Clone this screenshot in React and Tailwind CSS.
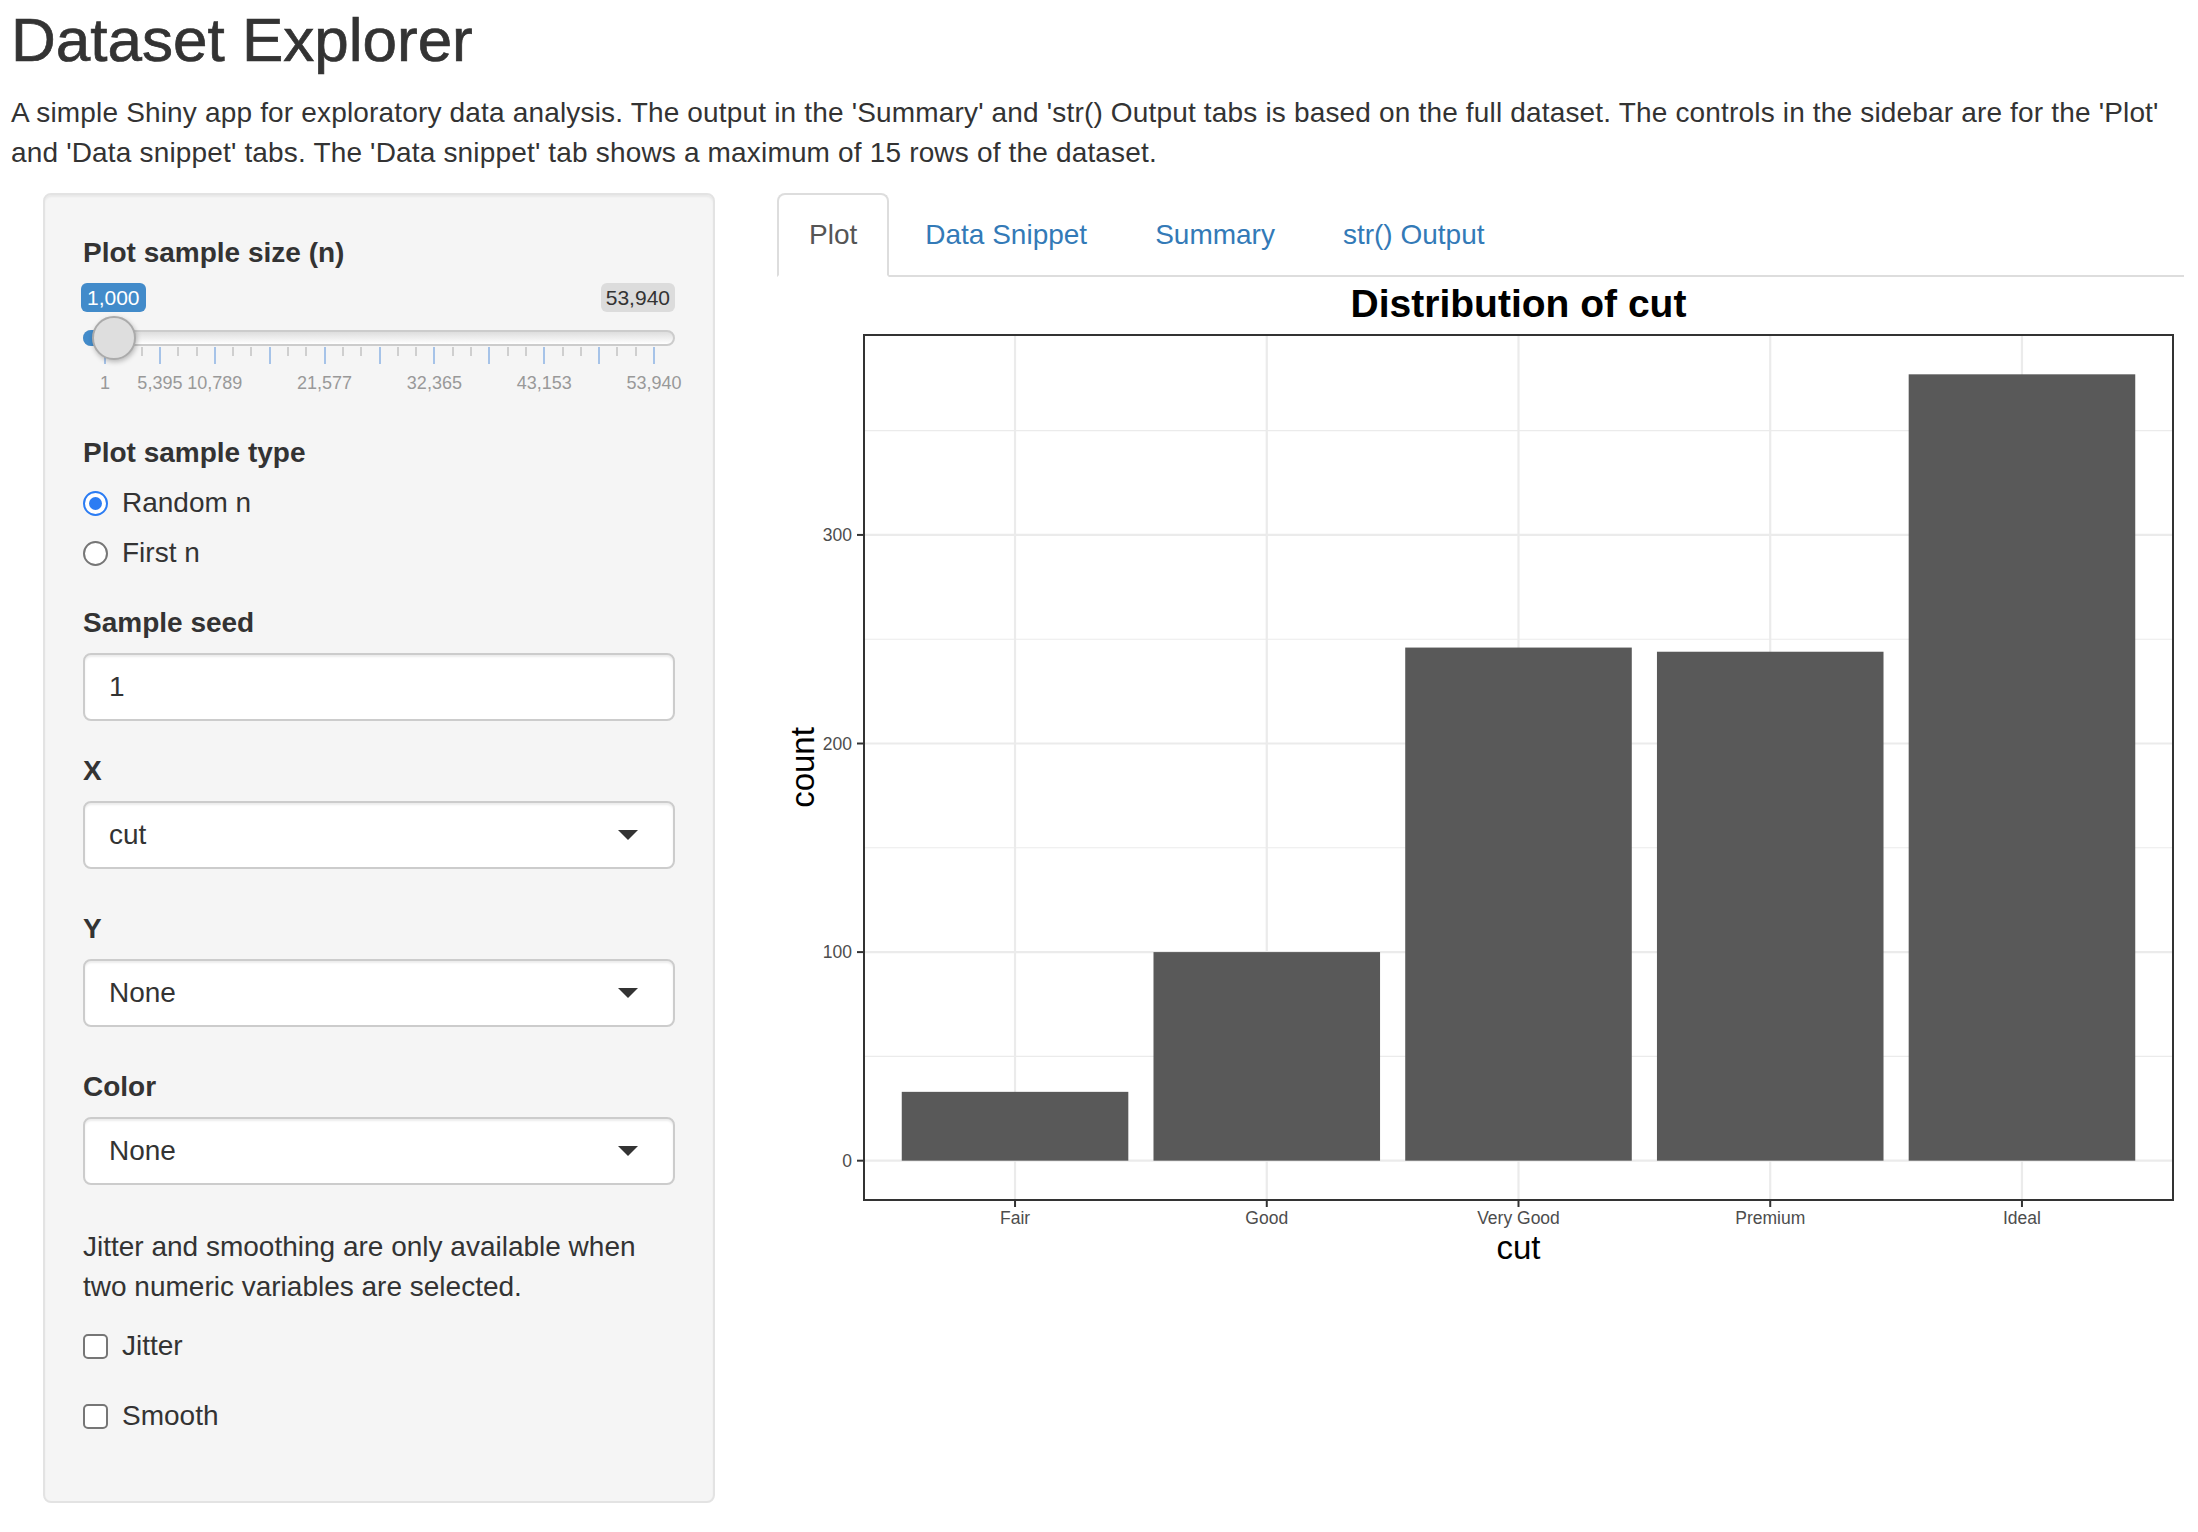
import React from "react";

const counts = [
  { cut: "Fair", n: 33 },
  { cut: "Good", n: 100 },
  { cut: "Very Good", n: 246 },
  { cut: "Premium", n: 244 },
  { cut: "Ideal", n: 377 },
];

const sliderLabels = [
  { k: 0, t: "1" },
  { k: 1, t: "5,395" },
  { k: 2, t: "10,789" },
  { k: 4, t: "21,577" },
  { k: 6, t: "32,365" },
  { k: 8, t: "43,153" },
  { k: 10, t: "53,940" },
];

const Label = ({ children, className = "mb-[10px]" }) => (
  <div className={"font-bold leading-[40px] " + className}>{children}</div>
);

const Caret = () => (
  <span className="w-0 h-0 border-l-[10px] border-r-[10px] border-t-[10px] border-l-transparent border-r-transparent border-t-[#333]" />
);

const SelectBox = ({ value, className = "" }) => (
  <div
    className={
      "h-[68px] flex items-center justify-between pl-[24px] pr-[35px] bg-white border-2 border-[#cccccc] rounded-[8px] shadow-[inset_0_2px_2px_rgba(0,0,0,0.075)] " +
      className
    }
  >
    <span>{value}</span>
    <Caret />
  </div>
);

const Slider = () => {
  const gap = 54.9;
  const majors = Array.from({ length: 11 }, (_, k) => 22 + k * gap);
  const minors = [];
  for (let k = 0; k < 10; k++) {
    minors.push(22 + k * gap + gap / 3);
    minors.push(22 + k * gap + (2 * gap) / 3);
  }
  return (
    <div className="relative h-[120px] mb-[32px]">
      <span className="absolute left-[-2px] top-[2px] h-[29px] px-[6px] rounded-[6px] bg-[#428bca] text-white text-[21px] leading-[29px]">
        1,000
      </span>
      <span className="absolute right-0 top-[2px] h-[29px] px-[5px] rounded-[6px] bg-[#dcdcdc] text-[#333] text-[21px] leading-[29px]">
        53,940
      </span>
      <div className="absolute left-0 right-0 top-[49px] h-[16px] rounded-full border-2 border-[#cccccc] bg-linear-to-b from-[#dedede] to-white" />
      <div className="absolute left-0 top-[49px] h-[16px] w-[32px] rounded-l-full bg-[#428bca]" />
      {minors.map((x, i) => (
        <span key={"m" + i} className="absolute top-[66px] h-[9px] w-[2px] bg-[#cfcfcf]" style={{ left: x - 1 }} />
      ))}
      {majors.map((x, i) => (
        <span key={"M" + i} className="absolute top-[66px] h-[17px] w-[2px] bg-[#a6c3e8]" style={{ left: x - 1 }} />
      ))}
      {sliderLabels.map((l) => (
        <span
          key={l.t}
          className="absolute top-[91px] text-[18px] leading-[22px] text-[#999] -translate-x-1/2 whitespace-nowrap"
          style={{ left: 22 + l.k * gap }}
        >
          {l.t}
        </span>
      ))}
      <div className="absolute left-[9px] top-[35px] w-[44px] h-[44px] rounded-full border-2 border-[#ababab] bg-[#dedede] shadow-[1px_2px_5px_rgba(0,0,0,0.25)]" />
    </div>
  );
};

const Radio = ({ checked, children, className = "" }) => (
  <div className={"flex items-center h-[40px] " + className}>
    {checked ? (
      <span className="w-[25px] h-[25px] rounded-full border-2 border-[#2b7cf3] bg-white flex items-center justify-center">
        <span className="w-[13px] h-[13px] rounded-full bg-[#2b7cf3]" />
      </span>
    ) : (
      <span className="w-[25px] h-[25px] rounded-full border-2 border-[#767676] bg-white" />
    )}
    <span className="ml-[14px]">{children}</span>
  </div>
);

const Check = ({ children, className = "" }) => (
  <div className={"flex items-center h-[40px] " + className}>
    <span className="w-[25px] h-[25px] rounded-[5px] border-2 border-[#767676] bg-white" />
    <span className="ml-[14px]">{children}</span>
  </div>
);

const Chart = () => {
  const px0 = 87, px1 = 1396, py0 = 58, py1 = 923;
  const lo = -18.85, hi = 395.85;
  const y = (v) => py1 - ((v - lo) / (hi - lo)) * (py1 - py0);
  const step = (px1 - px0) / 5.2;
  const x = (i) => px0 + (i + 0.6) * step;
  const half = 0.45 * step;
  const font = "Liberation Sans, Arial, sans-serif";

  return (
    <svg width={1407} height={1000} className="block" fontFamily={font}>
      <rect x={px0} y={py0} width={px1 - px0} height={py1 - py0} fill="#fff" />
      {[50, 150, 250, 350].map((v) => (
        <line key={"mn" + v} x1={px0} x2={px1} y1={y(v)} y2={y(v)} stroke="#ebebeb" strokeWidth="1.1" />
      ))}
      {[0, 100, 200, 300].map((v) => (
        <line key={"mj" + v} x1={px0} x2={px1} y1={y(v)} y2={y(v)} stroke="#ebebeb" strokeWidth="2.2" />
      ))}
      {counts.map((c, i) => (
        <line key={"v" + i} x1={x(i)} x2={x(i)} y1={py0} y2={py1} stroke="#ebebeb" strokeWidth="2.2" />
      ))}
      {counts.map((c, i) => (
        <rect key={"b" + i} x={x(i) - half} y={y(c.n)} width={half * 2} height={y(0) - y(c.n)} fill="#595959" />
      ))}
      <rect x={px0} y={py0} width={px1 - px0} height={py1 - py0} fill="none" stroke="#333" strokeWidth="2" />

      {[0, 100, 200, 300].map((v) => (
        <g key={"yt" + v}>
          <line x1={px0 - 7} x2={px0} y1={y(v)} y2={y(v)} stroke="#333" strokeWidth="2" />
          <text x={75} y={y(v) + 6} textAnchor="end" fontSize="17.5" fill="#4d4d4d">
            {v}
          </text>
        </g>
      ))}
      {counts.map((c, i) => (
        <g key={"xt" + i}>
          <line x1={x(i)} x2={x(i)} y1={py1} y2={py1 + 7} stroke="#333" strokeWidth="2" />
          <text x={x(i)} y={947} textAnchor="middle" fontSize="17.5" fill="#4d4d4d">
            {c.cut}
          </text>
        </g>
      ))}

      <text x={(px0 + px1) / 2} y={40} textAnchor="middle" fontSize="39" fontWeight="bold" fill="#000">
        Distribution of cut
      </text>
      <text x={(px0 + px1) / 2} y={982} textAnchor="middle" fontSize="33" fill="#000">
        cut
      </text>
      <text
        x={37}
        y={(py0 + py1) / 2}
        textAnchor="middle"
        fontSize="33"
        fill="#000"
        transform={`rotate(-90 37 ${(py0 + py1) / 2})`}
      >
        count
      </text>
    </svg>
  );
};

const tabs = ["Plot", "Data Snippet", "Summary", "str() Output"];

export default function App() {
  return (
    <div className="min-h-screen bg-white text-[#333] text-[28px] leading-[40px] font-['Liberation_Sans',Arial,sans-serif] pl-[11px] pr-[14px]">
      <h2 className="text-[62px] leading-[66px] pt-[7px] mb-[20px] [-webkit-text-stroke:0.7px_#333]">Dataset Explorer</h2>
      <p className="mb-[20px] tracking-[0.17px]">
        A simple Shiny app for exploratory data analysis. The output in the 'Summary' and 'str() Output tabs is based on
        the full dataset. The controls in the sidebar are for the 'Plot'
        <br />
        and 'Data snippet' tabs. The 'Data snippet' tab shows a maximum of 15 rows of the dataset.
      </p>

      <div className="flex items-start">
        <aside className="ml-[32px] w-[672px] shrink-0 bg-[#f5f5f5] border-2 border-[#e3e3e3] rounded-[8px] shadow-[inset_0_2px_2px_rgba(0,0,0,0.05)] px-[38px] pt-[38px] pb-[65px]">
          <Label className="mb-[8px]">Plot sample size (n)</Label>
          <Slider />

          <Label>Plot sample type</Label>
          <Radio checked>Random n</Radio>
          <Radio className="mt-[10px] mb-[30px]">First n</Radio>

          <Label>Sample seed</Label>
          <div className="h-[68px] flex items-center px-[24px] bg-white border-2 border-[#cccccc] rounded-[8px] shadow-[inset_0_2px_2px_rgba(0,0,0,0.075)] mb-[30px]">
            1
          </div>

          <Label>X</Label>
          <SelectBox value="cut" className="mb-[40px]" />

          <Label>Y</Label>
          <SelectBox value="None" className="mb-[40px]" />

          <Label>Color</Label>
          <SelectBox value="None" className="mb-[42px]" />

          <p className="mb-[19px]">Jitter and smoothing are only available when two numeric variables are selected.</p>
          <Check className="mb-[30px]">Jitter</Check>
          <Check>Smooth</Check>
        </aside>

        <main className="ml-[62px] flex-1 min-w-0">
          <ul className="flex border-b-2 border-[#dddddd]">
            {tabs.map((t, i) => (
              <li key={t} className="-mb-[2px] mr-[4px]">
                <a
                  className={
                    i === 0
                      ? "block px-[30px] py-[20px] leading-[40px] border-2 border-[#dddddd] border-b-white rounded-t-[8px] bg-white text-[#555]"
                      : "block px-[30px] py-[20px] leading-[40px] border-2 border-transparent rounded-t-[8px] text-[#337ab7]"
                  }
                >
                  {t}
                </a>
              </li>
            ))}
          </ul>
          <Chart />
        </main>
      </div>
    </div>
  );
}
